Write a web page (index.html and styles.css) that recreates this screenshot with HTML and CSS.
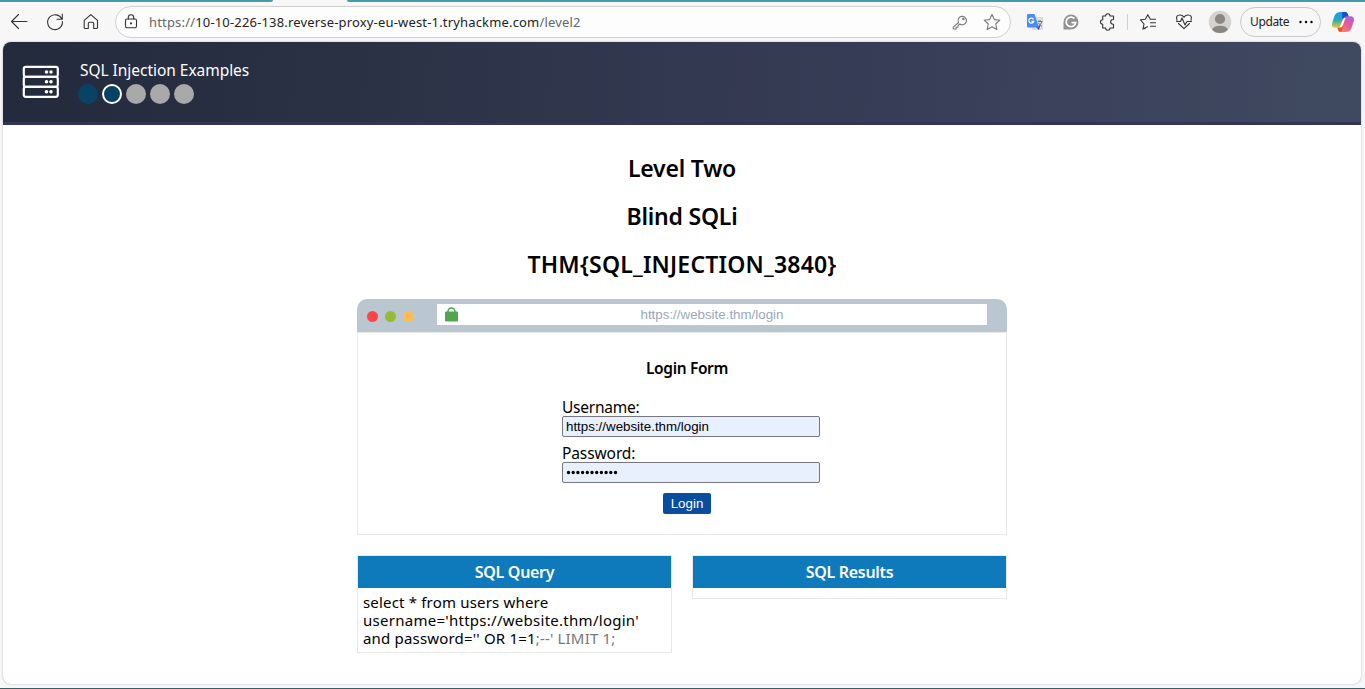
FILE: index.html
```html
<!DOCTYPE html>
<html lang="en">
<head>
<meta charset="utf-8">
<title>SQL Injection Examples</title>
<link rel="stylesheet" href="styles.css">
</head>
<body>
<div class="tabs"><i class="tabs-left"></i><i class="tabs-right"></i></div>
<div class="toolbar">
  <svg class="nav-icon" viewBox="0 0 112 40" width="112" height="40">
    <g class="stroke dark">
      <path d="M27 19.5H11.500M18.500 12.500L11.500 19.500L18.500 26.500"/>
      <path d="M61.800 17.200A7.400 7.400 0 1 0 62.400 19.500M62.300 12V17.300H57"/>
      <path d="M84.200 18.400L90.800 12.600L97.500 18.400V25.500Q97.500 26.500 96.500 26.500H93.700V21.800Q93.700 20.300 92.300 20.300H89.700Q88.300 20.300 88.300 21.800V26.500H85.200Q84.200 26.500 84.200 25.500Z"/>
    </g>
  </svg>
  <div class="address">
    <svg viewBox="0 0 14 16" width="14" height="16" class="stroke dark">
      <rect x="1.500" y="5" width="11" height="8.800" rx="1.500"/><path d="M4.300 5V3.500a2.700 2.700 0 0 1 5.400 0V5"/><circle cx="7" cy="9.400" r=".5" fill="#333"/>
    </svg>
    <span class="url"><span class="dim">https://</span>10-10-226-138.reverse-proxy-eu-west-1.tryhackme.com<span class="dim">/level2</span></span>
    <svg viewBox="0 0 50 18" width="50" height="18" class="stroke mid addr-icons">
      <path d="M7.500 9.500L2.300 14.200V16H5.200V14.300H7V12.600L8.800 11A4.200 4.200 0 1 0 7.500 9.500Z"/><circle cx="12.300" cy="5.900" r=".7"/>
      <path d="M41 1.500L43.300 6.600L48.800 7.200L44.700 11L45.900 16.500L41 13.700L36.100 16.500L37.300 11L33.200 7.200L38.700 6.600Z"/>
    </svg>
  </div>
  <svg class="ext-icons" viewBox="1017 2 216 40" width="216" height="40">
    <rect x="1032" y="17" width="11" height="13" fill="#dedede"/>
    <path d="M1035 26l4 4l1-4z" fill="#1b3fc4"/>
    <path d="M1028 14H1034.500L1039 27.500H1028Q1027 27.500 1027 26.500V15Q1027 14 1028 14Z" fill="#4b8bf5"/>
    <path d="M1033.500 19.300a2.500 2.500 0 1 0 .3 2H1031.500" fill="none" stroke="#fff" stroke-width="1.300"/>
    <path d="M1037.500 21.500h5M1040 20v1.500M1042 21.500q-1 3-3.500 5M1038.500 23q1 2 3.500 3.500" fill="none" stroke="#607d8b"/>
    <path d="M1071 14.500a7.500 7.500 0 1 1 0 15H1063.500V22A7.500 7.500 0 0 1 1071 14.500Z" fill="#929292"/>
    <path d="M1074.500 18.600a4.800 4.800 0 1 0 1.200 4H1071.500" fill="none" stroke="#fff" stroke-width="1.700"/>
    <g class="stroke dark">
      <path d="M1102.700 16H1105.600A2.200 2.200 0 0 1 1110 16H1113.500V19.500H1113A2 2 0 0 0 1113 24.200H1113.500V28H1110A2.200 2.200 0 0 1 1105.600 28H1102.700V24.200A2.200 2.200 0 0 1 1102.700 19.800Z"/>
      <path d="M1145 28.700L1143.800 28.200L1143 29L1144 24L1140.500 19.800L1145.300 19.200L1147.800 14.700L1150.300 19.200H1155.500M1150.500 22.700H1155.500M1150.500 26.200H1155.500M1142.800 29L1147.500 26.800"/>
      <path d="M1177 20.300Q1175.300 15 1180 15Q1182.500 15 1184 17.200Q1185.500 15 1188 15Q1192.600 15 1191 20.300M1178.500 23.500L1184 28.700L1189.500 23.500M1176.500 21.500H1180.500L1182 18L1185 25L1187 21.500H1191.500"/>
    </g>
    <path d="M1127.500 14V30" stroke="#cfcfcf"/>
    <circle cx="1220" cy="22" r="11.200" fill="#d5d3d0"/><circle cx="1220" cy="19" r="5.100" fill="#8b8682"/>
    <path d="M1212 29.500Q1213.500 25.700 1220 25.700T1228 29.500Q1225 33 1220 33T1212 29.500Z" fill="#8b8682"/>
  </svg>
  <div class="update"><span>Update</span><svg viewBox="0 0 14 4" width="14" height="4"><circle cx="1.500" cy="2" r="1.200"/><circle cx="7" cy="2" r="1.200"/><circle cx="12.500" cy="2" r="1.200"/></svg></div>
  <svg class="copilot" viewBox="0 0 24 22" width="24" height="22">
    <defs>
      <linearGradient id="ca" x1="0" y1="0" x2="0" y2="1"><stop offset="0" stop-color="#1b96f5"/><stop offset=".5" stop-color="#22aabb"/><stop offset="1" stop-color="#e8cc22"/></linearGradient>
      <linearGradient id="cb" x1="1" y1="0" x2="0" y2="1"><stop offset="0" stop-color="#a35cf0"/><stop offset=".5" stop-color="#ec5a92"/><stop offset="1" stop-color="#ff9a4a"/></linearGradient>
    </defs>
    <path d="M10 1H14.500Q16.300 1 17 3.500L18 7H14Q12 7 11 10L9.500 14.500Q8.700 16.700 7 16.700H4Q0 16.700 1.300 11.500L3.500 5Q5 1 10 1Z" fill="url(#ca)"/>
    <path d="M11 1H14.500Q16.300 1 17 3.500L18 7H14Q12.500 7 11.500 8.500Z" fill="#1451d2"/>
    <path d="M14 21H9.500Q7.700 21 7 18.500L6.500 16.700Q9 16.500 10 13.500L12.500 7Q13.500 5.300 16 5.300H19Q24 5.300 22.700 10.500L20.500 17Q19 21 14 21Z" fill="url(#cb)"/>
    <path d="M12.800 7H15Q14.200 7.400 13.500 9.500L12 14Q11.200 16.700 9 16.700H8Q9.500 15.500 10 13.500Z" fill="#fff"/>
    <path d="M6.500 16.700H9.500Q11 16.500 12 14.500L11.500 18Q11 21 9.500 21Q7.700 21 7 18.500Z" fill="#f0522d"/>
  </svg>
</div>
<main class="page">
  <header class="banner">
    <svg viewBox="0 0 38 34" width="38" height="34" class="server">
      <g fill="none" stroke="#fff" stroke-width="2.200"><rect x="1.800" y="1.800" width="34" height="10" rx="2"/><rect x="1.800" y="11.800" width="34" height="10" rx="2"/><rect x="1.800" y="21.800" width="34" height="10" rx="2"/></g>
      <g fill="#fff"><circle cx="24.500" cy="7" r="1.800"/><circle cx="29" cy="7" r="1.800"/><circle cx="24.500" cy="16.800" r="1.800"/><circle cx="29" cy="16.800" r="1.800"/><circle cx="24.500" cy="26.700" r="1.800"/><circle cx="29" cy="26.700" r="1.800"/></g>
    </svg>
    <div class="banner-text">
      <div class="title">SQL Injection Examples</div>
      <div class="steps"><i class="done"></i><i class="done current"></i><i></i><i></i><i></i></div>
    </div>
  </header>
  <section class="level">
    <h2 class="h-level">Level Two</h2>
    <h2 class="h-kind">Blind SQLi</h2>
    <h2 class="h-flag">THM{SQL_INJECTION_3840}</h2>
    <div class="mock-bar">
      <i class="dot red"></i><i class="dot green"></i><i class="dot amber"></i>
      <div class="mock-url">
        <svg viewBox="0 0 13 15" width="13" height="15"><path d="M3 6V4.500a3.500 3.500 0 0 1 7 0V6" fill="none" stroke="#4fa64f" stroke-width="1.600"/><rect y="4.500" width="13" height="10" rx="1" fill="#4fa64f"/></svg>
        <span>https://website.thm/login</span>
      </div>
    </div>
    <div class="mock-body">
      <h3>Login Form</h3>
      <div class="form">
        <label class="lb-user">Username:</label>
        <div class="field">https://website.thm/login</div>
        <label class="lb-pass">Password:</label>
        <div class="field"><svg viewBox="0 0 54 5" width="54" height="5"><path d="M2.500 2.500H50" stroke="#000" stroke-width="3.400" stroke-linecap="round" stroke-dasharray="0 4.700"/></svg></div>
      </div>
      <div class="login">Login</div>
    </div>
    <div class="panels">
      <div class="panel"><div class="panel-head">SQL Query</div>
        <div class="panel-body"><div class="q1">select * from users where</div><div class="q2">username='https://website.thm/login'</div><div class="q3">and password='' OR 1=1<span>;--' LIMIT 1;</span></div></div>
      </div>
      <div class="panel"><div class="panel-head results">SQL Results</div><div class="panel-body"></div></div>
    </div>
  </section>
</main>
<div class="edge"></div>
</body>
</html>
```

FILE: styles.css
```css
* { box-sizing: border-box; }
body { margin: 0; width: 1365px; height: 689px; overflow: hidden; background: #f7f7f7; display: flex; flex-direction: column; font: 16px/18px "Noto Sans", sans-serif; color: #000; }
svg { display: block; flex: none; }
.stroke { fill: none; stroke-width: 1.1; stroke-linejoin: round; stroke-linecap: round; }
.dark { stroke: #333; }
.mid { stroke: #777; }

.tabs { display: flex; justify-content: space-between; height: 2px; flex: none; }
.tabs i { background: #4499ab; }
.tabs-left { width: 273px; border-bottom-right-radius: 2px; }
.tabs-right { width: 1018px; border-bottom-left-radius: 2px; }

.toolbar { height: 40px; flex: none; display: flex; align-items: center; }
.address { width: 896px; height: 32px; margin-left: 3px; border: 1px solid #cfcfcf; border-radius: 16px; background: #fdfdfd; display: flex; align-items: center; padding: 0 9px 0 8px; }
.url { margin-left: 11px; flex: 1; font-size: 13px; letter-spacing: 0.17px; color: #222; white-space: nowrap; }
.dim { color: #666; }
.ext-icons { margin-left: 6px; }
.update { width: 81px; height: 30px; margin-left: 7px; border: 1px solid #c9c9c9; border-radius: 15px; display: flex; align-items: center; padding-left: 9px; gap: 10px; font-size: 12px; letter-spacing: -0.35px; color: #222; }
.copilot { margin-left: 10px; }

.page { width: 1358px; height: 642px; flex: none; margin-left: 3px; background: #fff; border-radius: 8px; overflow: hidden; box-shadow: 0 0 2px #aaa; }
.banner { height: 83px; background: linear-gradient(94deg, #232a3c 0%, #2b3246 28%, #3b405b 75%, #3f4a60 100%); border-bottom: 3px solid #323554; display: flex; padding: 23px 0 0 19px; }
.banner-text { margin: -4px 0 0 20px; color: #fff; }
.title { white-space: nowrap; font-size: 15.5px; letter-spacing: -0.04px; }
.steps { display: flex; gap: 4px; margin: 5px 0 0 -2px; }
.steps i { width: 20px; height: 20px; border-radius: 50%; background: #a9a9a9; }
.steps .done { background: #084366; }
.steps .current { border: 2px solid #fff; }

.level { width: 650px; margin: 29px 0 0 354px; }
h2 { margin: 0 0 20px; font-size: 23px; line-height: 28px; font-weight: 600; text-align: center; white-space: nowrap; letter-spacing: -0.2px; }
.h-flag { margin-bottom: 21px; letter-spacing: 0.2px; }
.mock-bar { height: 33px; background: #bac7d0; border-radius: 10px 10px 0 0; display: flex; align-items: flex-start; padding: 5px 0 0 10px; }
.dot { width: 11px; height: 11px; border-radius: 50%; margin: 7px 7px 0 0; }
.red { background: #ff4444; }
.green { background: #99bb33; }
.amber { background: #ffbb55; }
.mock-url { margin-left: 16px; width: 550px; height: 21px; background: #fff; display: flex; align-items: center; padding-left: 8px; font: 13.33px/21px "Liberation Sans", Arial, sans-serif; color: #99a9ba; }
.mock-url span { flex: 1; text-align: center; padding-right: 21px; }
.mock-body { height: 203px; border: 1px solid #e8e8e8; padding: 26px 0 0 10px; }
h3 { margin: 0; font-size: 15.5px; line-height: 18px; font-weight: 600; text-align: center; letter-spacing: -0.35px; }
.form { margin: 21px 0 0 194px; width: 258px; }
.form label { display: block; height: 18px; line-height: 18px; font-size: 15.5px; letter-spacing: -0.25px; }
.form .lb-pass { letter-spacing: -0.1px; }
.field { height: 21px; margin-bottom: 7px; border: 1px solid #767680; border-radius: 2px; background: #e8f0fe; padding-left: 3px; font: 13.33px/19px "Liberation Sans", Arial, sans-serif; display: flex; align-items: center; }
.login { width: 48px; height: 21px; margin: 10px auto 0; border-radius: 2px; background: #0a4d9f; color: #fff; font: 13.33px/21px "Liberation Sans", Arial, sans-serif; text-align: center; }
.panels { display: flex; justify-content: space-between; align-items: flex-start; margin-top: 20px; }
.panel { width: 315px; border: 1px solid #e8e8e8; }
.panel-head { height: 32px; line-height: 33px; background: #0f7abb; color: #fff; font-weight: 600; text-align: center; letter-spacing: -0.3px; }
.panel-body { padding: 5px; font-size: 15px; line-height: 18px; white-space: nowrap; letter-spacing: 0.18px; }
.q2 { letter-spacing: 0.27px; }
.q3 { letter-spacing: 0.18px; }
.panel-body span { color: #777; }
.edge { margin-top: 4px; height: 1px; flex: none; background: #356068; }
```
